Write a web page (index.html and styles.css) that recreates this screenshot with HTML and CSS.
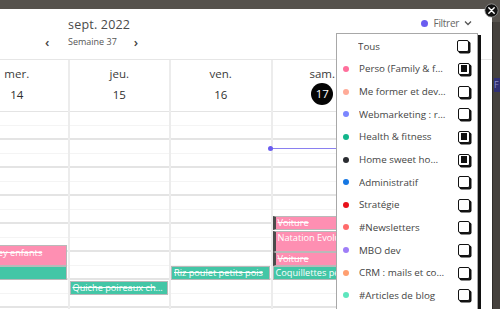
FILE: index.html
```html
<!DOCTYPE html>
<html lang="fr">
<head>
<meta charset="utf-8">
<link rel="stylesheet" href="styles.css">
</head>
<body>
<div class="backdrop-strip"><span class="strip-tag">F</span></div>
<div class="modal">
  <div class="toolbar">
    <div class="period">
      <div class="month">sept. 2022</div>
      <div class="week">
        <span class="chev">&#8249;</span>
        <span class="week-label">Semaine 37</span>
        <span class="chev">&#8250;</span>
      </div>
    </div>
    <div class="filter">
      <span class="filter-dot"></span>
      <span class="filter-label">Filtrer</span>
      <svg class="filter-chev" width="8" height="6" viewBox="0 0 8 6"><path d="M1 1.5 L4 4.5 L7 1.5" fill="none" stroke="#555" stroke-width="1.3"/></svg>
    </div>
  </div>
  <div class="cal">
    <div class="col">
      <div class="head"><div class="dname">mer.</div><div class="dnum">14</div></div>
      <div class="body">
        <div class="ev pink done cut" style="top:133px;height:21px">Anniversaire Lucey enfants</div>
        <div class="ev teal" style="top:154px;height:14px">Pâtes</div>
      </div>
    </div>
    <div class="col">
      <div class="head"><div class="dname">jeu.</div><div class="dnum">15</div></div>
      <div class="body">
        <div class="ev teal done" style="top:169px;height:14px">Quiche poireaux chèvre</div>
      </div>
    </div>
    <div class="col">
      <div class="head"><div class="dname">ven.</div><div class="dnum">16</div></div>
      <div class="body">
        <div class="ev teal done" style="top:154px;height:14px">Riz poulet petits pois</div>
      </div>
    </div>
    <div class="col">
      <div class="head"><div class="dname">sam.</div><div class="dnum today">17</div></div>
      <div class="body">
        <div class="now"></div>
        <div class="ev pink done bar" style="top:104px;height:14px">Voiture</div>
        <div class="ev pink bar" style="top:119px;height:21px">Natation Evolution</div>
        <div class="ev pink done bar" style="top:140px;height:14px">Voiture</div>
        <div class="ev teal" style="top:154px;height:14px">Coquillettes pesto</div>
      </div>
    </div>
  </div>

  <div class="dropdown">
    <div class="opt"><span class="nodot"></span><span class="lbl all">Tous</span><span class="cb"></span></div>
    <div class="opt"><span class="dot" style="background:#ff6f9c"></span><span class="lbl">Perso (Family &amp; friends)</span><span class="cb on"></span></div>
    <div class="opt"><span class="dot" style="background:#ffab98"></span><span class="lbl">Me former et devenir</span><span class="cb"></span></div>
    <div class="opt"><span class="dot" style="background:#7b86ff"></span><span class="lbl">Webmarketing : réseaux</span><span class="cb"></span></div>
    <div class="opt"><span class="dot" style="background:#12b58b"></span><span class="lbl">Health &amp; fitness</span><span class="cb on"></span></div>
    <div class="opt"><span class="dot" style="background:#2a2c31"></span><span class="lbl">Home sweet home !</span><span class="cb on"></span></div>
    <div class="opt"><span class="dot" style="background:#1577e3"></span><span class="lbl">Administratif</span><span class="cb"></span></div>
    <div class="opt"><span class="dot" style="background:#e8101a"></span><span class="lbl">Stratégie</span><span class="cb"></span></div>
    <div class="opt"><span class="dot" style="background:#ff6b6b"></span><span class="lbl">#Newsletters</span><span class="cb"></span></div>
    <div class="opt"><span class="dot" style="background:#9f7ef7"></span><span class="lbl">MBO dev</span><span class="cb"></span></div>
    <div class="opt"><span class="dot" style="background:#ff9f70"></span><span class="lbl">CRM : mails et contacts</span><span class="cb"></span></div>
    <div class="opt"><span class="dot" style="background:#5ee6be"></span><span class="lbl">#Articles de blog</span><span class="cb"></span></div>
  </div>
</div>
<svg class="close" width="15" height="15" viewBox="0 0 15 15">
  <circle cx="7.5" cy="7.5" r="6.6" fill="#111" stroke="#999" stroke-width="0.8"/>
  <path d="M4.8 4.8 L10.2 10.2 M10.2 4.8 L4.8 10.2" stroke="#fff" stroke-width="1.4" stroke-linecap="round"/>
</svg>
</body>
</html>
```
FILE: styles.css
```css
* { box-sizing: border-box; }
html, body { margin: 0; padding: 0; }
body {
  width: 500px;
  height: 309px;
  overflow: hidden;
  background: #56524d;
  padding-top: 9px;
  font-family: "Open Sans", "DejaVu Sans", sans-serif;
  position: relative;
}
.backdrop-strip {
  position: absolute;
  left: 492px;
  top: 22px;
  width: 8px;
  height: 287px;
  background: #45413d;
  border-left: 1px solid #2e2b28;
}
.strip-tag {
  position: absolute;
  left: 1px;
  top: 56px;
  width: 8px;
  height: 14px;
  background: #2f2f73;
  color: #8a8ac8;
  font-size: 9px;
  line-height: 14px;
}
.modal {
  position: relative;
  width: 492px;
  height: 300px;
  background: #fff;
  overflow: hidden;
}
.toolbar {
  height: 50px;
  display: flex;
  align-items: flex-start;
  padding: 6px 0 0 45px;
}
.period { display: flex; flex-direction: column; }
.month {
  margin-left: 23px;
  font-size: 12.5px;
  color: #4a4a4a;
  line-height: 19px;
  letter-spacing: 0.2px;
}
.week {
  display: flex;
  align-items: center;
  margin-top: 1px;
  line-height: 14px;
}
.chev {
  font-size: 13px;
  color: #444;
  width: 6px;
  font-weight: 600;
}
.week-label {
  font-size: 9px;
  color: #555;
  margin: 0 17px 0 17px;
}
.filter {
  margin-left: auto;
  margin-right: 20px;
  margin-top: 1px;
  display: flex;
  align-items: center;
}
.filter-dot {
  width: 7px;
  height: 7px;
  border-radius: 50%;
  background: #6a5cf0;
}
.filter-label {
  font-size: 10px;
  color: #666;
  margin-left: 6px;
  letter-spacing: -0.3px;
}
.filter-chev { margin-left: 5px; }

.cal {
  display: flex;
  margin-left: -34px;
  border-top: 1.5px solid #e6e6e6;
}
.col {
  flex: 0 0 101.5px;
  border-left: 2px solid #ececec;
  display: flex;
  flex-direction: column;
}
.col:first-child { border-left: none; }
.head {
  height: 52px;
  border-bottom: 1.5px solid #e4e4e4;
  display: flex;
  flex-direction: column;
  align-items: center;
  padding-top: 6px;
  color: #333;
}
.dname { font-size: 11.5px; line-height: 16px; color: #3a3a3a; }
.dnum {
  margin-top: 5px;
  font-size: 11.5px;
  line-height: 16px;
  color: #2e2e2e;
}
.dnum.today {
  margin-top: 1px;
  width: 22px;
  height: 22px;
  line-height: 22px;
  border-radius: 50%;
  background: #050505;
  color: #fff;
  text-align: center;
}
.body {
  position: relative;
  height: 200px;
  background:
    repeating-linear-gradient(to bottom,
      transparent 0, transparent 13.5px,
      #f4f4f4 13.5px, #f4f4f4 14.5px,
      transparent 14.5px, transparent 26.5px,
      #e4e4e4 26.5px, #e4e4e4 28px);
}
.ev {
  position: absolute;
  left: 0;
  right: 1px;
  color: #fff;
  font-size: 9.2px;
  line-height: 12px;
  padding: 0 2px;
  white-space: nowrap;
  overflow: hidden;
  text-overflow: ellipsis;
  border: 1px solid #b9b9b9;
}
.ev.cut { text-indent: -42px; line-height: 13px; text-overflow: clip; }
.ev.pink { background: #fe8fb2; }
.ev.teal { background: #43c6a6; }
.ev.done { text-decoration: line-through; }
.ev.bar { border-left: 3px solid #4b4b4b; }
.now {
  position: absolute;
  left: -2px;
  right: 0;
  top: 36px;
  height: 1px;
  background: #8a80f0;
  z-index: 2;
}
.now::before {
  content: "";
  position: absolute;
  left: -2.5px;
  top: -2px;
  width: 5px;
  height: 5px;
  border-radius: 50%;
  background: #6a5cf0;
}
.dropdown {
  position: absolute;
  left: 336px;
  top: 24px;
  width: 142px;
  height: 290px;
  background: #fff;
  border: 1px solid #a8a8a8;
  box-shadow: 3px 2px 0 #111;
  padding-top: 1px;
  z-index: 5;
}
.opt {
  height: 22.65px;
  display: flex;
  align-items: center;
  padding-left: 6px;
}
.dot, .nodot {
  width: 6px;
  height: 6px;
  border-radius: 50%;
  flex: none;
}
.lbl {
  margin-left: 10px;
  width: 87px;
  font-size: 9.8px;
  color: #444;
  white-space: nowrap;
  overflow: hidden;
  text-overflow: ellipsis;
}
.lbl.all { margin-left: 9px; }
.cb {
  margin-left: 12px;
  width: 12px;
  height: 12px;
  border: 1.3px solid #111;
  border-radius: 2px;
  box-shadow: 1.5px 1.5px 0 #111;
  background: #fff;
  position: relative;
  flex: none;
}
.cb.on::after {
  content: "";
  position: absolute;
  left: 1.5px;
  top: 1.5px;
  width: 6.5px;
  height: 6.5px;
  background: #111;
}
.close {
  position: absolute;
  left: 484px;
  top: 3px;
}
```
